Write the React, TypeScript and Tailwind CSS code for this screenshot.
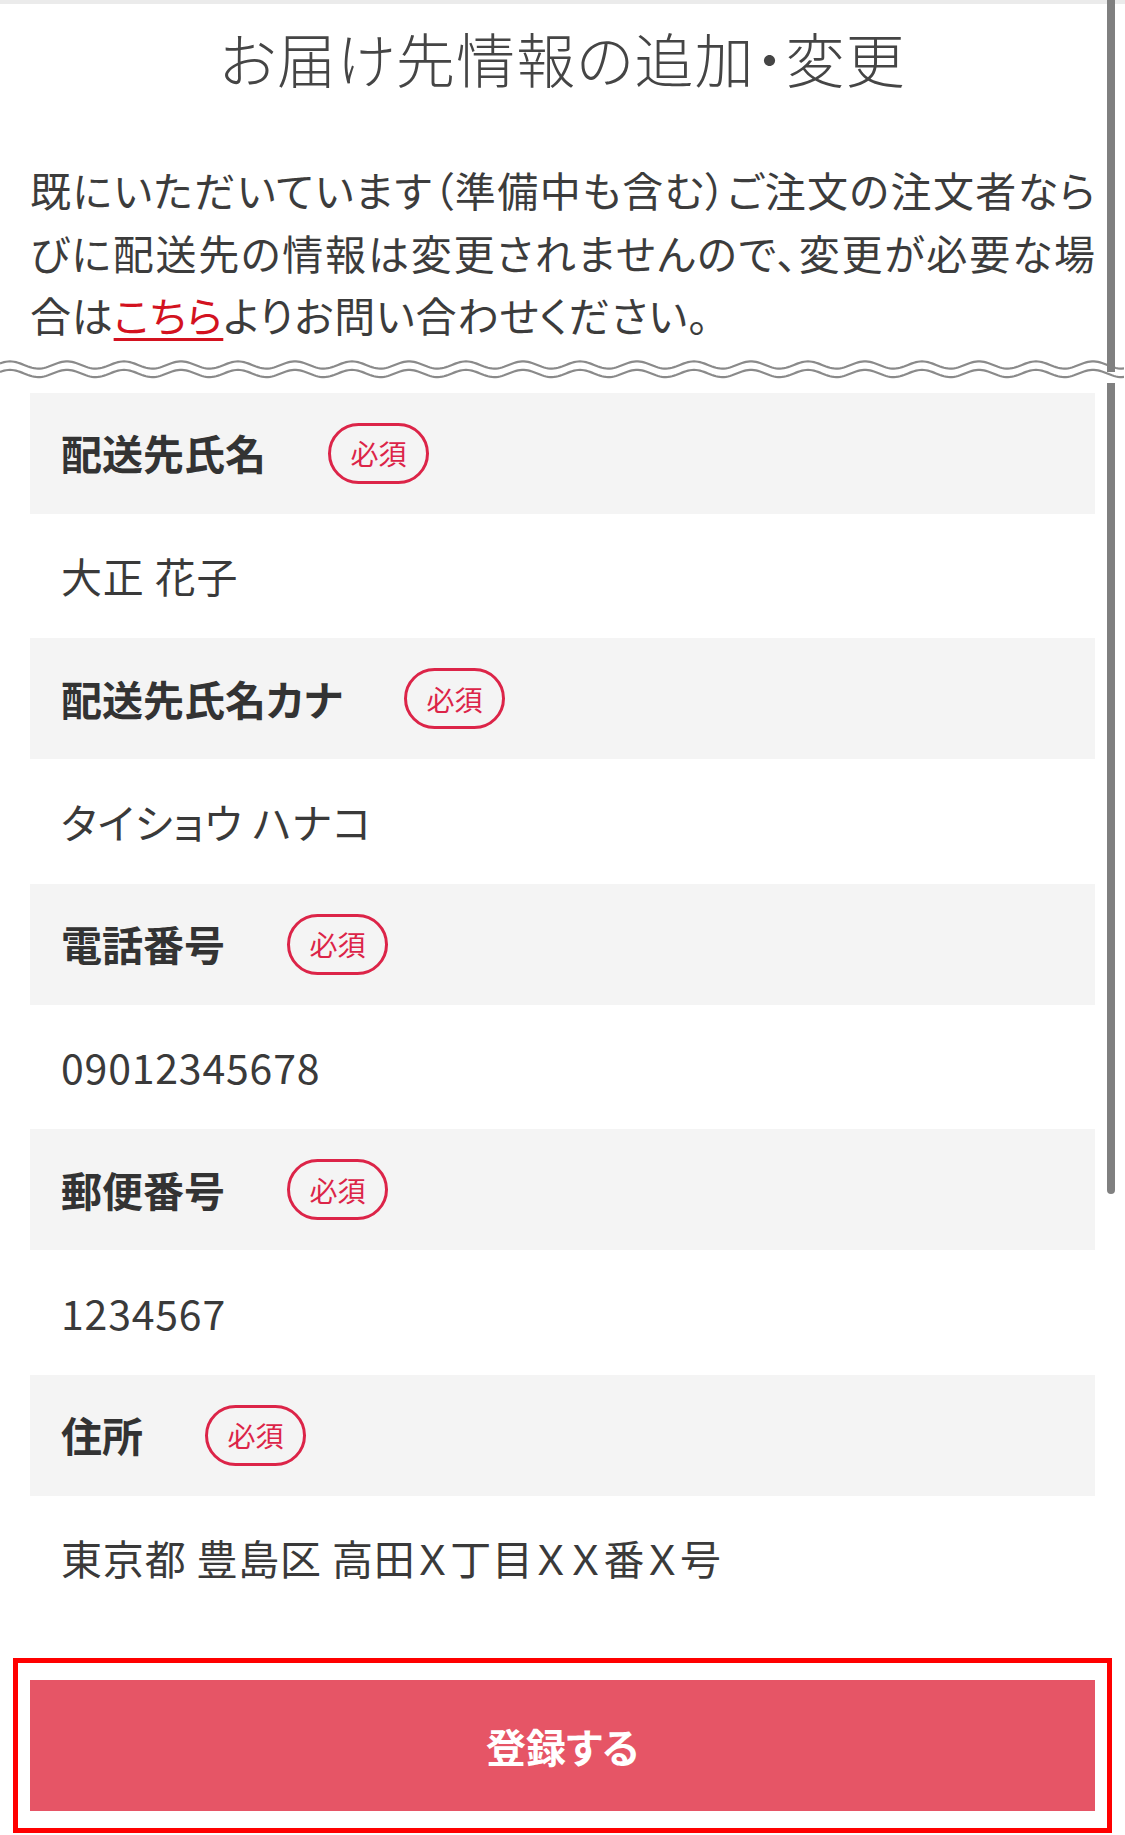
import React from "react";

const fields = [
  { label: "配送先氏名", value: "大正 花子" },
  { label: "配送先氏名カナ", value: "タイショウ ハナコ" },
  { label: "電話番号", value: "09012345678" },
  { label: "郵便番号", value: "1234567" },
  { label: "住所", value: "東京都 豊島区 高田Ｘ丁目ＸＸ番Ｘ号" },
];

// two parallel wavy lines under the notice
function wavePath(y0: number) {
  const pts: string[] = [];
  for (let x = 0; x <= 1125; x += 2) {
    const y = y0 - 3.6 * Math.cos((2 * Math.PI * (x - 10)) / 57);
    pts.push(`${x === 0 ? "M" : "L"}${x} ${y.toFixed(2)}`);
  }
  return pts.join(" ");
}

function Badge() {
  return (
    <span className="ml-[62px] inline-flex h-[61px] w-[101px] items-center justify-center rounded-full border-[3px] border-[#dc2448] text-[28px] leading-none text-[#dc2448]">
      必須
    </span>
  );
}

export default function App() {
  return (
    <div className="relative h-[1835px] w-[1125px] overflow-hidden bg-white font-['Noto_Sans_CJK_JP',sans-serif] text-[#3c3c3c] [font-feature-settings:'palt']">
      {/* top edge */}
      <div className="h-[4px] bg-[#ebebeb]" />

      <h1 className="flex h-[106px] items-center justify-center text-[59px] font-light leading-none tracking-[0.02em] text-[#454545]">
        お届け先情報の追加・変更
      </h1>

      {/* notice */}
      <div className="mt-[48px] px-[30px] text-[41px] leading-[62.5px]">
        <span className="block whitespace-nowrap text-justify [text-align-last:justify]">
          既にいただいています（準備中も含む）ご注文の注文者なら
        </span>
        <span className="block whitespace-nowrap text-justify [text-align-last:justify]">
          びに配送先の情報は変更されませんので、変更が必要な場
        </span>
        <span className="block whitespace-nowrap tracking-[0.02em]">
          合は
          <a href="#" className="text-[#d3121f] underline decoration-[3px] underline-offset-[6px]">
            こちら
          </a>
          よりお問い合わせください。
        </span>
      </div>

      <svg className="mt-[12px] block" width="1125" height="24" viewBox="0 0 1125 24">
        <path d={wavePath(7)} fill="none" stroke="#8a8a8a" strokeWidth="2.2" />
        <path d={wavePath(15.5)} fill="none" stroke="#8a8a8a" strokeWidth="2.2" />
      </svg>

      {/* form */}
      <div className="mx-[30px] mt-[11px] flex flex-col">
        {fields.map((f) => (
          <div key={f.label} className="flex flex-col">
            <div className="flex h-[121px] items-center bg-[#f4f4f4] pl-[31px]">
              <span className="text-[41px] font-bold text-[#333]">{f.label}</span>
              <Badge />
            </div>
            <div className="flex h-[124.5px] items-center pl-[31px] text-[41px] tracking-[0.02em] text-[#3a3a3a]">
              {f.value}
            </div>
          </div>
        ))}
      </div>

      {/* submit, boxed */}
      <div className="mx-[13px] mt-[38px] h-[175px] border-[5px] border-[#ff0000] px-[12px] py-[17px]">
        <button className="flex h-[131px] w-full items-center justify-center bg-[#e65566] text-[40px] font-bold text-white">
          登録する
        </button>
      </div>

      {/* scrollbar thumbs */}
      <div className="absolute left-[1107px] top-0 h-[372px] w-[8px] bg-[#808080]" />
      <div className="absolute left-[1107px] top-[383px] h-[811px] w-[8px] rounded-b-[4px] bg-[#808080]" />
    </div>
  );
}
